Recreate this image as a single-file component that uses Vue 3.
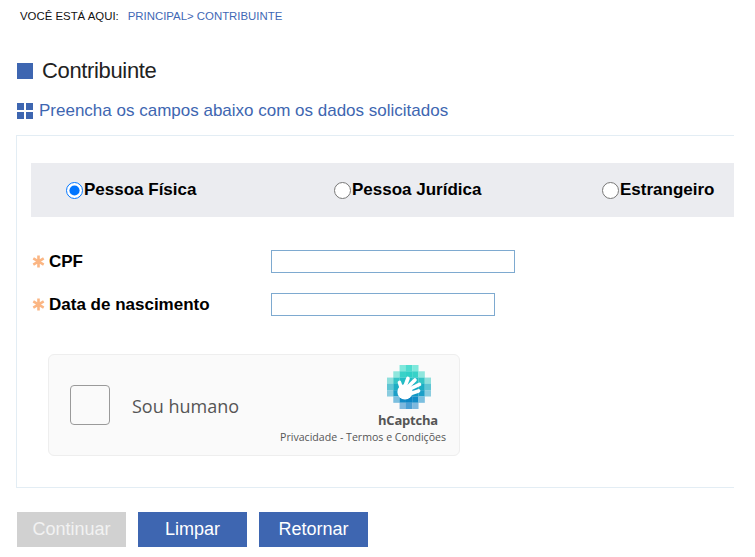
<script setup>
import { ref } from "vue";

const tipo = ref("fisica");

const tipos = [
    { id: "fisica", label: "Pessoa Física" },
    { id: "juridica", label: "Pessoa Jurídica" },
    { id: "estrangeiro", label: "Estrangeiro" },
];

const campos = [
    { id: "cpf", label: "CPF", cls: "input-cpf" },
    { id: "nascimento", label: "Data de nascimento", cls: "input-data" },
];

// mosaico do logo do hCaptcha, linha a linha de cima para baixo
const mosaico = [
    { cols: [2, 3, 4], cor: ["#7fe8dc", "#4fdccf", "#7fe8dc"] },
    { cols: [1, 2, 3, 4, 5], cor: ["#8fe6dd", "#38d2c8", "#2fd0c6", "#38d2c8", "#8fe6dd"] },
    { cols: [0, 1, 2, 3, 4, 5, 6], cor: ["#8fdfdc", "#35c5c6", "#22bcc4", "#22bcc4", "#22bcc4", "#35c5c6", "#8fdfdc"] },
    { cols: [0, 1, 2, 3, 4, 5, 6], cor: ["#5fc5d4", "#1daec4", "#14a8c2", "#14a8c2", "#14a8c2", "#1daec4", "#5fc5d4"] },
    { cols: [0, 1, 2, 3, 4, 5, 6], cor: ["#8accdf", "#1c9fc8", "#1197c4", "#1197c4", "#1197c4", "#1c9fc8", "#8accdf"] },
    { cols: [1, 2, 3, 4, 5], cor: ["#7bbfdf", "#118bc6", "#0c86c4", "#118bc6", "#7bbfdf"] },
    { cols: [2, 3, 4], cor: ["#7db8de", "#4a9fd4", "#7db8de"] },
];

const celulas = mosaico.flatMap((linha, y) =>
    linha.cols.map((x, i) => ({ key: `${x}-${y}`, x: x * 6.3, y: y * 6.3, cor: linha.cor[i] }))
);
</script>

<template>
    <div class="pagina">
        <div class="breadcrumb">
            <span class="aqui">VOCÊ ESTÁ AQUI:</span>
            <span class="trilha">PRINCIPAL&gt; CONTRIBUINTE</span>
        </div>

        <h1 class="titulo"><span class="quadrado"></span>Contribuinte</h1>

        <p class="subtitulo">
            <span class="grade"><i></i><i></i><i></i><i></i></span>
            Preencha os campos abaixo com os dados solicitados
        </p>

        <div class="caixa">
            <div class="tipos">
                <label v-for="t in tipos" :key="t.id" class="tipo">
                    <input type="radio" name="tipo" :value="t.id" v-model="tipo" />{{ t.label }}
                </label>
            </div>

            <div class="campos">
                <div v-for="c in campos" :key="c.id" class="campo">
                    <label :for="c.id" class="rotulo">
                        <svg class="asterisco" viewBox="0 0 12 12" width="13" height="13">
                            <path d="M6 .5V11.500M1.200 3.200L10.800 8.800M10.800 3.200L1.200 8.800" stroke="#fbb684" stroke-width="2.400" />
                        </svg>
                        {{ c.label }}
                    </label>
                    <input :id="c.id" type="text" class="entrada" :class="c.cls" />
                </div>
            </div>

            <div class="captcha">
                <span class="check"></span>
                <span class="humano">Sou humano</span>
                <div class="marca">
                    <svg class="logo" viewBox="0 0 44.1 44.1" width="44" height="44">
                        <rect v-for="p in celulas" :key="p.key" :x="p.x" :y="p.y" width="6.4" height="6.4" :fill="p.cor" />
                        <g stroke="#fff" stroke-width="3.700" stroke-linecap="round" fill="none">
                            <path d="M15 25L12.500 17.500" />
                            <path d="M17 24L21 13.500" />
                            <path d="M19 24L28 15" />
                            <path d="M21 25L32.500 19.500" />
                            <path d="M21 29.500L31.500 26" />
                        </g>
                        <circle cx="18" cy="27" r="7.600" fill="#fff" />
                    </svg>
                    <span class="nome">hCaptcha</span>
                    <span class="termos">Privacidade - Termos e Condições</span>
                </div>
            </div>
        </div>

        <div class="botoes">
            <button class="botao" disabled>Continuar</button>
            <button class="botao">Limpar</button>
            <button class="botao">Retornar</button>
        </div>
    </div>
</template>

<style scoped>
.pagina {
    width: 734px;
    height: 557px;
    overflow: hidden;
    font-family: "Liberation Sans", Arial, sans-serif;
    background: #fff;
}

.breadcrumb {
    display: flex;
    gap: 9px;
    padding: 10px 0 0 20px;
    font-size: 11.400px;
    line-height: 13px;
    color: #111;
}

.trilha {
    color: #3f68b5;
}

.titulo {
    display: flex;
    align-items: center;
    margin: 35px 0 0 17px;
    font-size: 22px;
    line-height: 26px;
    font-weight: 400;
    letter-spacing: -0.35px;
    color: #222;
}

.quadrado {
    width: 16px;
    height: 16px;
    margin-right: 9px;
    background: #3e66b1;
}

.subtitulo {
    display: flex;
    align-items: center;
    gap: 6px;
    margin: 17px 0 0 17px;
    font-size: 17px;
    line-height: 20px;
    color: #3e66b1;
}

.grade {
    display: grid;
    grid-template-columns: 7px 7px;
    grid-auto-rows: 7px;
    gap: 2px;
}

.grade i {
    background: #3e66b1;
}

.caixa {
    box-sizing: border-box;
    height: 353px;
    margin: 14px 0 0 16px;
    padding: 27px 0 0 14px;
    border: 1px solid #e3edf4;
    border-right: none;
}

.tipos {
    display: flex;
    height: 54px;
    padding-left: 35px;
    align-items: center;
    overflow: hidden;
    background: #ebecf0;
}

.tipo {
    display: flex;
    flex: none;
    align-items: center;
    width: 268px;
    font-size: 17px;
    font-weight: 700;
    color: #000;
}

.tipo input {
    width: 17px;
    height: 17px;
    margin: 0 1px 0 0;
}

.campos {
    display: flex;
    flex-direction: column;
    gap: 20px;
    margin-top: 33px;
}

.campo {
    display: flex;
    align-items: center;
}

.rotulo {
    display: flex;
    align-items: center;
    gap: 4px;
    width: 240px;
    padding-left: 1px;
    box-sizing: border-box;
    font-size: 17px;
    font-weight: 700;
    color: #000;
}

.entrada {
    box-sizing: border-box;
    height: 23px;
    padding: 0 4px;
    border: 1px solid #7eaad0;
    background: #fff;
    outline: none;
}

.input-cpf {
    width: 244px;
}

.input-data {
    width: 224px;
}

.captcha {
    box-sizing: border-box;
    display: flex;
    align-items: center;
    width: 412px;
    height: 102px;
    margin: 38px 0 0 17px;
    padding-left: 21px;
    background: #fafafa;
    border: 1px solid #eeeeee;
    border-radius: 6px;
    font-family: "Open Sans", "Noto Sans", sans-serif;
}

.check {
    box-sizing: border-box;
    width: 40px;
    height: 40px;
    background: #fafafa;
    border: 1px solid #9a9a9a;
    border-radius: 4px;
}

.humano {
    margin: 2px 0 0 22px;
    font-size: 18px;
    color: #555;
}

.marca {
    margin-left: auto;
    width: 180px;
    padding-right: 13px;
    box-sizing: border-box;
    display: flex;
    flex-direction: column;
    align-items: flex-end;
}

.logo {
    margin-right: 15px;
    margin-bottom: 1px;
}

.nome {
    margin-top: 1px;
    margin-right: 8px;
    font-size: 13px;
    line-height: 18px;
    font-weight: 700;
    letter-spacing: -0.2px;
    color: #555;
}

.termos {
    font-size: 10.600px;
    line-height: 16px;
    white-space: nowrap;
    color: #555;
}

.botoes {
    display: flex;
    gap: 12px;
    margin: 24px 0 0 17px;
}

.botao {
    width: 109px;
    height: 35px;
    padding: 0;
    border: none;
    background: #3e66b1;
    color: #fff;
    font-family: inherit;
    font-size: 18px;
}

.botao:disabled {
    background: #d1d1d1;
    color: #f2f2f2;
}
</style>
